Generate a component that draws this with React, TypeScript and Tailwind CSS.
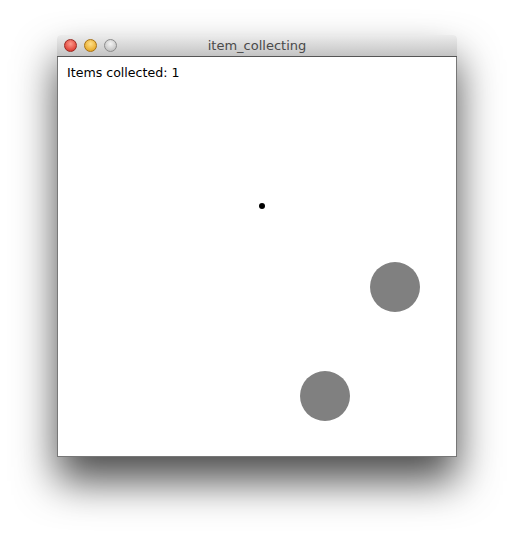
import React from "react";

const Light = ({ from, to, ring }: { from: string; to: string; ring: string }) => (
  <div
    className={`w-[13px] h-[13px] rounded-full border ${ring}`}
    style={{ background: `radial-gradient(circle at 50% 35%, ${from}, ${to})` }}
  />
);

export default function App() {
  return (
    <div className="w-[514px] h-[536px] bg-white pt-[35px] pl-[57px]">
      <div className="w-[400px] shadow-[0_24px_42px_rgba(0,0,0,0.7)] rounded-t-[4px]">
        <div className="relative h-[22px] rounded-t-[4px] bg-gradient-to-b from-[#ececec] to-[#c4c4c4] border-b border-[#555] flex items-center px-[7px] gap-[7px]">
          <Light from="#ff9a8c" to="#d3231b" ring="border-[#9a2a22]" />
          <Light from="#ffe08a" to="#e09a0e" ring="border-[#a87213]" />
          <Light from="#f4f4f4" to="#b4b4b4" ring="border-[#8c8c8c]" />
          <div
            className="absolute inset-0 flex items-center justify-center text-[13px] text-[#4a4a4a]"
            style={{ fontFamily: '"DejaVu Sans", sans-serif' }}
          >
            item_collecting
          </div>
        </div>
        <div className="relative h-[400px] bg-white border-x border-b border-[#777]">
          <div
            className="pl-[9px] pt-[7px] text-[12.6px] text-black"
            style={{ fontFamily: '"DejaVu Sans", sans-serif' }}
          >
            Items collected: 1
          </div>
          <div className="absolute left-[201px] top-[146px] w-[6px] h-[6px] rounded-full bg-black" />
          <div className="absolute left-[312px] top-[205px] w-[50px] h-[50px] rounded-full bg-[#808080]" />
          <div className="absolute left-[242px] top-[314px] w-[50px] h-[50px] rounded-full bg-[#808080]" />
        </div>
      </div>
    </div>
  );
}
